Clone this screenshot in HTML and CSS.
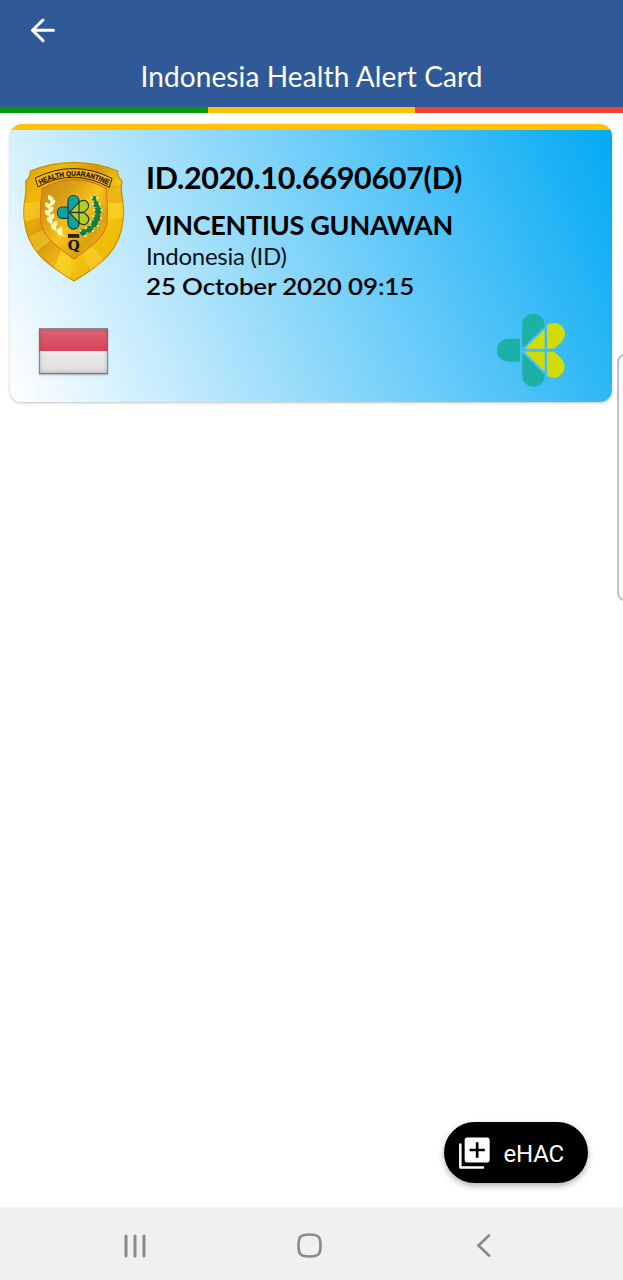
FILE: index.html
```html
<!DOCTYPE html>
<html lang="en">
<head>
<meta charset="utf-8">
<title>Indonesia Health Alert Card</title>
<link rel="stylesheet" href="styles.css">
</head>
<body>
<div class="screen">
  <header class="header">
    <svg class="back" viewBox="0 0 25 25"><path d="M23.500 12.300H2.500M13 2L2.500 12.300L13 22.600" fill="none" stroke="#fff" stroke-width="3" stroke-linecap="round" stroke-linejoin="round"/></svg>
    <h1 class="title"><span>Indonesia Health Alert Card</span></h1>
  </header>
  <div class="stripes"><i class="green"></i><i class="amber"></i><i class="red"></i></div>

  <main class="content">
    <article class="card">
      <div class="card-bar"></div>
      <div class="card-body">
        <div class="media">
          <svg class="badge" viewBox="0 0 390 420">
            <defs>
              <linearGradient id="gold" x1="0" y1="0" x2="1" y2="1">
                <stop offset="0" stop-color="#d99c08"/><stop offset=".2" stop-color="#f2b705"/><stop offset=".4" stop-color="#d59a0c"/><stop offset=".58" stop-color="#f8c81a"/><stop offset=".8" stop-color="#efb906"/><stop offset="1" stop-color="#d89a05"/>
              </linearGradient>
              <linearGradient id="inner" x1="0" y1="0" x2="1" y2="1">
                <stop offset="0" stop-color="#c58b16"/><stop offset=".3" stop-color="#dba116"/><stop offset=".5" stop-color="#f8c51c"/><stop offset=".72" stop-color="#d9a011"/><stop offset="1" stop-color="#f6c60b"/>
              </linearGradient>
              <clipPath id="shield-clip"><path d="M192 37Q122 38 61 63Q62 82 47 93Q50 125 43 160Q40 190 43 210C52 298 104 340 192 393C280 340 331 298 339 210Q343 185 338 150Q331 125 336 93Q322 82 323 63Q265 38 192 37Z"/></clipPath>
              <path id="arc" d="M88 106Q190 50 296 106"/>
              <path id="leaf" d="M0 0C-15-2-19-11-15-20C-4-18 2-10 0 0Z"/>
            </defs>
            <path d="M192 37Q122 38 61 63Q62 82 47 93Q50 125 43 160Q40 190 43 210C52 298 104 340 192 393C280 340 331 298 339 210Q343 185 338 150Q331 125 336 93Q322 82 323 63Q265 38 192 37Z" fill="url(#gold)" stroke="#c89208" stroke-width="4"/>
            <g clip-path="url(#shield-clip)">
              <path d="M40 160L95 154V202L42 215ZM57 260L108 235L130 264L78 306ZM155 295L192 315L180 390L130 365ZM218 315L247 290L290 338L245 370ZM288 214L345 202V158L289 160Z" fill="#ffdc3d" opacity=".4"/>
              <path d="M78 306L130 264L155 295L130 365ZM289 160L284 110L345 100V158Z" fill="#b8780d" opacity=".2"/>
            </g>
            <path d="M95 116Q192 62 289 116Q286 138 292 158V205C292 260 242 288 192 328C142 288 92 260 92 205V158Q98 138 95 116Z" fill="url(#inner)" stroke="#e5571b" stroke-width="2.500"/>
            <path d="M76 84Q190 27 306 85L298 112Q190 52 84 111Z" fill="#f1b71b" stroke="#34230b" stroke-width="3"/>
            <text class="badge-text"><textPath href="#arc" startOffset="50%" text-anchor="middle" textLength="212" lengthAdjust="spacingAndGlyphs">HEALTH QUARANTINE</textPath></text>
            <path d="M130 143C105 175 112 241 168 260" fill="none" stroke="#fff2a4" stroke-width="3"/>
            <g fill="#fff9bd">
              <use href="#leaf" x="130" y="155"/><use href="#leaf" x="122" y="177"/><use href="#leaf" x="121" y="199"/><use href="#leaf" x="127" y="221"/><use href="#leaf" x="139" y="242"/><use href="#leaf" x="157" y="258"/>
              <use href="#leaf" transform="translate(119 168) rotate(80)"/><use href="#leaf" transform="translate(115 190) rotate(75)"/><use href="#leaf" transform="translate(119 212) rotate(70)"/><use href="#leaf" transform="translate(130 234) rotate(65)"/><use href="#leaf" transform="translate(146 253) rotate(60)"/>
            </g>
            <path d="M251 145C276 173 279 229 213 250" fill="none" stroke="#187435" stroke-width="5"/>
            <g fill="#078247"><circle cx="252" cy="145" r="7"/><circle cx="258" cy="163" r="9"/><circle cx="264" cy="182" r="10"/><circle cx="261" cy="203" r="10"/><circle cx="253" cy="221" r="10"/><circle cx="238" cy="238" r="10"/><circle cx="219" cy="247" r="10"/></g>
            <path d="M245 143h1M262 144h1M249 162h1M268 161h1M252 180h1M274 181h1M250 199h1M273 205h1M241 217h1M263 227h1M228 233h1M248 244h1M211 242h1M226 257h1M207 254h1" stroke="#e1f1d3" stroke-width="6" stroke-linecap="round"/>
            <g stroke="#173a36" stroke-width="3.500" stroke-linejoin="round">
              <path d="M174 187V153C174 131 207 131 207 153V187ZM174 187V220C174 243 207 243 207 220V187ZM174 171H157C137 171 137 205 157 205H174Z" fill="#0ea4a5"/>
              <path d="M178 187L209 155C233 142 245 169 227 182L221 187ZM178 187L209 220C233 234 245 207 227 192L221 187Z" fill="#b4cd25"/>
              <path d="M207 155V223M174 188H220"/>
            </g>
            <path d="M174 252H208V263H174Z" fill="#23180a"/><path d="M183 252v11M192 252v11M200 252v11" stroke="#92700d" stroke-width="1"/>
            <text x="191" y="300" class="badge-q">Q</text>
          </svg>
          <div class="flag"></div>
        </div>
        <div class="details">
          <div class="number"><span>ID.2020.10.6690607(D)</span></div>
          <div class="name"><span>VINCENTIUS GUNAWAN</span></div>
          <div class="country"><span>Indonesia (ID)</span></div>
          <time class="date"><span>25 October 2020 09:15</span></time>
          <svg class="health-logo" viewBox="45 40 210 225">
            <path d="M117 117H82a34.500 34.500 0 0 0 0 69h35ZM124 145V76a33.500 33.500 0 0 1 67 0V79ZM124 159V228a33.500 33.500 0 0 0 67 0V225Z" fill="#1bb1a7"/>
            <path d="M131 147L191 88V147ZM198 147V77C222 60 252 75 252 103C252 118 243 126 220 147ZM131 156H191V216ZM198 156H220L241 177C265 204 241 234 220 234Q207 234 198 226Z" fill="#d1dc05"/>
          </svg>
        </div>
      </div>
    </article>
    <button class="ehac">
      <svg class="add-icon" viewBox="0 0 93 95"><path d="M4 22V91H72" fill="none" stroke="#fff" stroke-width="7.500" stroke-linecap="round" stroke-linejoin="round"/><rect x="17" y="1" width="75" height="75" rx="8" fill="#fff"/><path d="M54.500 15.500v46M31.500 38.500h46" stroke="#000" stroke-width="8"/></svg>
      <span>eHAC</span>
    </button>
  </main>

  <nav class="navbar">
    <svg viewBox="0 0 25 25"><path d="M3 3v20M12 3v20M21 3v20" fill="none" stroke="#8a8a8a" stroke-width="3" stroke-linecap="round"/></svg>
    <svg viewBox="0 0 25 25"><path d="M12.500 1.500C3.500 1.500 1.500 3.500 1.500 12.500S3.500 23.500 12.500 23.500S23.500 21.500 23.500 12.500S21.500 1.500 12.500 1.500Z" fill="none" stroke="#8a8a8a" stroke-width="2.700"/></svg>
    <svg viewBox="0 0 25 25"><path d="M18 2.500L7.500 12.500l10.500 10" fill="none" stroke="#8a8a8a" stroke-width="2.700" stroke-linecap="round"/></svg>
  </nav>
  <div class="edge-handle"></div>
</div>
</body>
</html>
```
FILE: styles.css
```css
* { box-sizing: border-box; }
body { margin: 0; background: #fff; font-family: Lato, sans-serif; }
.screen { position: relative; width: 623px; height: 1280px; display: flex; flex-direction: column; overflow: hidden; }
.header { height: 107px; background: #305a97; padding-top: 18px; flex: none; }
.back { display: block; width: 25px; height: 25px; margin-left: 30px; overflow: visible; }
.title { margin: 16px 0 0; font-size: 28px; line-height: 34px; font-weight: 400; letter-spacing: .12px; color: #fff; text-align: center; white-space: nowrap; }
.stripes { display: grid; grid-template-columns: 208px 207px 208px; height: 6px; flex: none; }
.green { background: #029a0e; }
.amber { background: #ffc107; }
.red { background: #f04439; }
.content { flex: 1; display: flex; flex-direction: column; padding: 11px 11px 24px 10px; }
.card { height: 278px; border-radius: 12px; overflow: hidden; box-shadow: 0 1px 3px rgba(0,0,0,.25); display: flex; flex-direction: column; }
.card-bar { height: 6px; background: #ffc107; }
.card-body { flex: 1; display: grid; grid-template-columns: 136px 1fr; background: linear-gradient(65.700deg, #fff, #03a9f4); }
.media { padding-top: 20px; }
.badge { display: block; width: 130px; height: 140px; }
.badge-text { font: 700 22px "Liberation Sans", sans-serif; fill: #171006; stroke: #171006; stroke-width: .6px; }
.badge-q { font: 700 46px "Liberation Serif", serif; fill: #111; stroke: #111; stroke-width: 1px; text-anchor: middle; }
.flag { width: 69px; height: 46px; margin: 38px 0 0 29px; border: 1px solid rgba(115,105,120,.75); box-shadow: inset 0 0 4px rgba(90,70,80,.35), 0 1px 2px rgba(0,0,0,.3); background: linear-gradient(#dc6474, #d84359 49%, #ebebeb 49%, #dedede); }
.details { display: flex; flex-direction: column; padding-top: 28px; color: #07131a; white-space: nowrap; }
.details span { display: inline-block; transform-origin: left center; }
.number { font-size: 30.500px; line-height: 38px; font-weight: 700; letter-spacing: -.320px; color: #000; }
.name { margin-top: 12px; font-size: 27px; line-height: 33px; font-weight: 700; letter-spacing: -.280px; color: #000; }
.country { margin-top: -1px; font-size: 24px; line-height: 31px; letter-spacing: -.280px; }
.date { font-size: 22.500px; line-height: 32px; font-weight: 600; letter-spacing: -.100px; color: #000; }
.date span { transform: scaleX(1.150); }
.health-logo { width: 70px; height: 75px; margin: 10px 0 0 349.500px; flex: none; }
.ehac { align-self: flex-end; margin: auto 24.500px 0 0; width: 144px; height: 61px; padding: 0 0 0 15px; border: 0; border-radius: 31px; background: #000; color: #fff; display: flex; align-items: center; gap: 14px; font: 400 24px Roboto, sans-serif; letter-spacing: -.200px; box-shadow: 0 3px 6px rgba(0,0,0,.3); }
.ehac span { padding-top: 2px; }
.add-icon { width: 31px; height: 32px; }
.navbar { height: 73px; flex: none; background: #f0f0f0; display: flex; align-items: center; justify-content: space-between; padding: 3px 127.500px 0 123px; }
.navbar svg { width: 25px; height: 25px; overflow: visible; }
.edge-handle { position: absolute; left: 617px; top: 354px; width: 20px; height: 247px; border: 2px solid #bfbfbf; border-radius: 8px; background: #fafafa; }
```
